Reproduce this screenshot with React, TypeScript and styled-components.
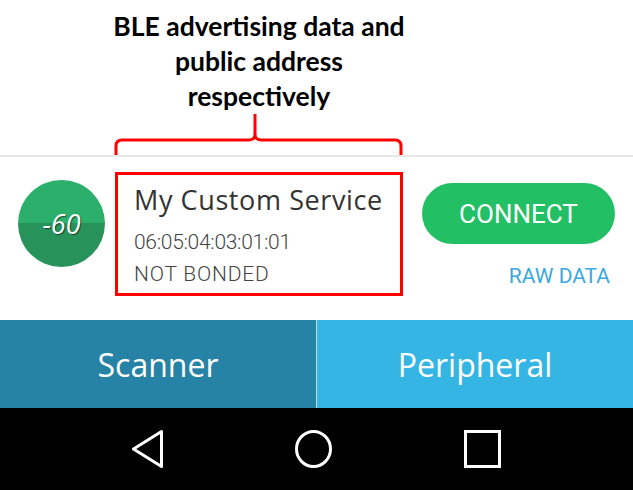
import React from 'react';
import styled, { createGlobalStyle } from 'styled-components';

const Global = createGlobalStyle`
  html, body { margin: 0; padding: 0; background: #fff; }
  body { width: 633px; height: 490px; overflow: hidden; }
`;

const Screen = styled.div`
  width: 633px;
  height: 490px;
  display: flex;
  flex-direction: column;
  background: #fff;
`;

const Annotation = styled.div`
  width: 518px;
  height: 155px;
  box-sizing: border-box;
  padding-top: 9px;
  display: flex;
  flex-direction: column;
  align-items: center;
`;

const Caption = styled.div`
  font-family: Lato, "Open Sans", sans-serif;
  font-weight: 700;
  font-size: 26.5px;
  line-height: 35px;
  color: #000;
  text-align: center;
`;

const Brace = styled.svg`
  display: block;
  flex: none;
`;

const DeviceRow = styled.div`
  height: 165px;
  box-sizing: border-box;
  border-top: 2px solid #e8e8e8;
  display: flex;
  align-items: flex-start;
  padding-left: 18px;
`;

const RssiBadge = styled.div`
  width: 87px;
  height: 87px;
  margin-top: 23px;
  border-radius: 50%;
  background: linear-gradient(#2baf6b 0 50%, #27935b 50% 100%);
  display: flex;
  align-items: center;
  justify-content: center;
  color: #fff;
  font-family: "Open Sans", sans-serif;
  font-style: italic;
  font-size: 27px;
  text-shadow: 1px 1px 1px rgba(0, 0, 0, 0.55);
  flex: none;
`;

const InfoBox = styled.div`
  width: 288px;
  height: 124px;
  margin: 15px 0 0 10px;
  box-sizing: border-box;
  border: 3px solid #ff0000;
  padding: 7px 0 0 16px;
  display: flex;
  flex-direction: column;
  flex: none;
`;

const DeviceName = styled.div`
  font-family: "Open Sans", sans-serif;
  font-size: 27px;
  letter-spacing: 0.6px;
  line-height: 35px;
  color: #333;
  white-space: nowrap;
`;

const DeviceDetail = styled.div<{ $gap?: number; $spacing?: number }>`
  font-family: Roboto, sans-serif;
  font-weight: 300;
  font-size: 21px;
  line-height: 32px;
  color: #444;
  letter-spacing: ${(p) => p.$spacing ?? 0}px;
  margin-top: ${(p) => p.$gap ?? 0}px;
  white-space: nowrap;
`;

const Actions = styled.div`
  margin: 26px 0 0 19px;
  display: flex;
  flex-direction: column;
  align-items: flex-end;
`;

const ConnectButton = styled.button`
  width: 193px;
  height: 61px;
  border: none;
  border-radius: 31px;
  background: #23bf65;
  color: #fff;
  font-family: Roboto, sans-serif;
  font-size: 26px;
  padding: 0;
  cursor: pointer;
`;

const RawLink = styled.div`
  margin: 20px 5px 0 0;
  font-family: Roboto, sans-serif;
  font-size: 21px;
  line-height: 24px;
  color: #3aa9e0;
`;

const Tabs = styled.div`
  height: 88px;
  display: flex;
`;

const Tab = styled.div<{ $active?: boolean }>`
  width: ${(p) => (p.$active ? '316px' : 'auto')};
  flex: ${(p) => (p.$active ? 'none' : '1')};
  background: ${(p) => (p.$active ? '#2683a6' : '#35b5e4')};
  border-left: ${(p) => (p.$active ? 'none' : '1px solid #b5def0')};
  display: flex;
  align-items: center;
  justify-content: center;
  color: #fff;
  font-family: "Open Sans", sans-serif;
  font-size: 32px;
`;

const NavBar = styled.div`
  height: 82px;
  background: #000;
  display: flex;
  align-items: center;
  justify-content: center;
  gap: 132px;
`;

const NavIcon = styled.svg`
  display: block;
`;

export default function App() {
  return (
    <Screen>
      <Global />
      <Annotation>
        <Caption>
          BLE advertising data and
          <br />
          public address
          <br />
          respectively
        </Caption>
        <Brace width="290" height="41" viewBox="0 0 290 41">
          <path
            d="M2 41 V32 Q2 26 8 26 H135 Q141 26 141 20 V0 M141 20 Q141 26 147 26 H281 Q287 26 287 32 V41"
            fill="none"
            stroke="#ff0000"
            strokeWidth="3"
          />
        </Brace>
      </Annotation>
      <DeviceRow>
        <RssiBadge>-60</RssiBadge>
        <InfoBox>
          <DeviceName>My Custom Service</DeviceName>
          <DeviceDetail $gap={9} $spacing={-0.3}>06:05:04:03:01:01</DeviceDetail>
          <DeviceDetail $spacing={0.8}>NOT BONDED</DeviceDetail>
        </InfoBox>
        <Actions>
          <ConnectButton>CONNECT</ConnectButton>
          <RawLink>RAW DATA</RawLink>
        </Actions>
      </DeviceRow>
      <Tabs>
        <Tab $active>Scanner</Tab>
        <Tab>Peripheral</Tab>
      </Tabs>
      <NavBar>
        <NavIcon width="31" height="38" viewBox="0 0 31 38">
          <path d="M29.5 1.5 V36.5 L1.5 19 Z" fill="none" stroke="#fff" strokeWidth="3" strokeLinejoin="round" />
        </NavIcon>
        <NavIcon width="37" height="38" viewBox="0 0 37 38">
          <ellipse cx="18.5" cy="19" rx="17" ry="17.5" fill="none" stroke="#fff" strokeWidth="3" />
        </NavIcon>
        <NavIcon width="37" height="38" viewBox="0 0 37 38">
          <rect x="1.5" y="1.5" width="34" height="35" fill="none" stroke="#fff" strokeWidth="3" />
        </NavIcon>
      </NavBar>
    </Screen>
  );
}
